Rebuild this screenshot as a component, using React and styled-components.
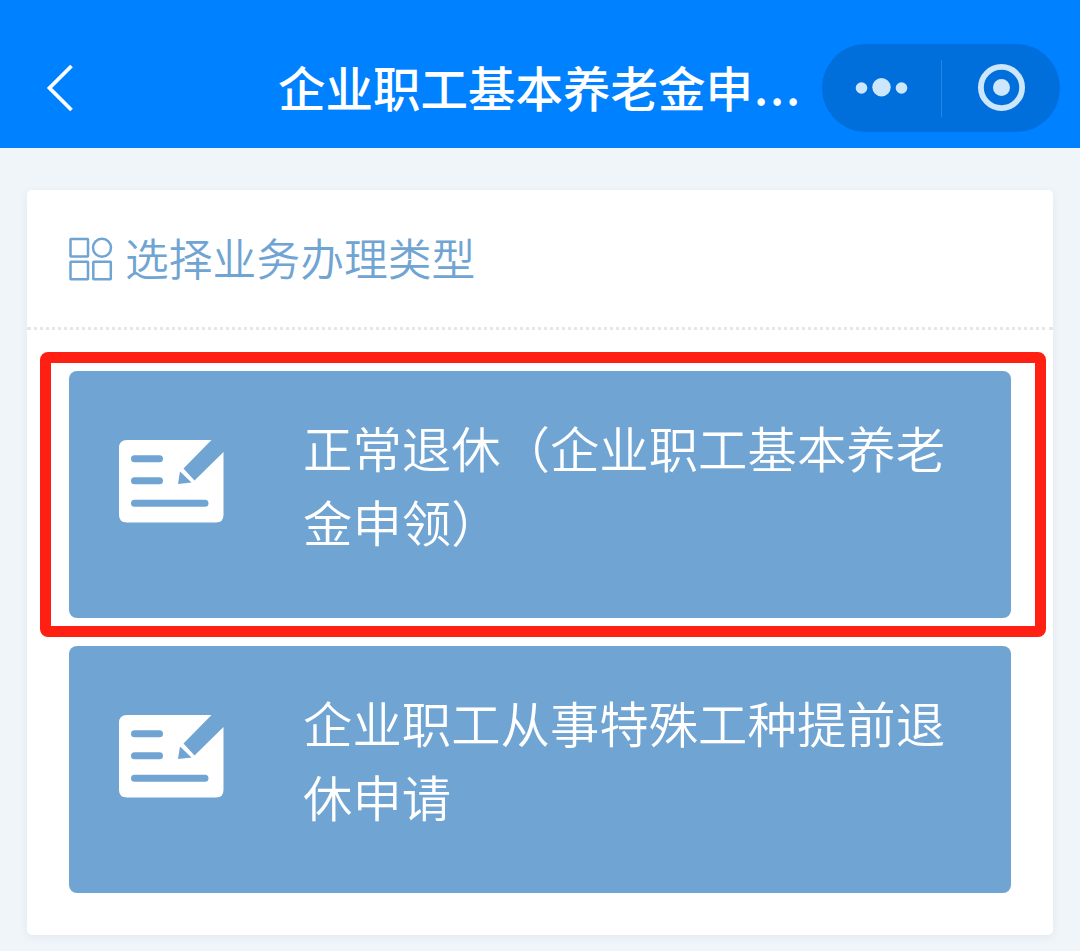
import React from 'react';
import styled, { createGlobalStyle } from 'styled-components';

const colors = {
  primary: '#0081ff',
  capsule: '#006fdb',
  capsuleIcon: '#cce6fb',
  page: '#f0f5f9',
  item: '#70a4d2',
  white: '#ffffff',
  mark: '#ff1f13',
};

const GlobalStyle = createGlobalStyle`
  * {
    box-sizing: border-box;
  }
  body {
    margin: 0;
    background: ${colors.page};
    font-family: 'Noto Sans CJK SC', sans-serif;
  }
`;

const Page = styled.div`
  width: 1080px;
  height: 951px;
  overflow: hidden;
  background: ${colors.page};
`;

const NavBar = styled.header`
  display: flex;
  align-items: center;
  height: 148px;
  padding: 28px 20px 0 44px;
  background: ${colors.primary};
`;

const BackButton = styled.button`
  display: flex;
  width: 32px;
  padding: 0;
  border: 0;
  background: none;
`;

const Title = styled.h1`
  flex: 1;
  margin: 0;
  padding: 0 0 2px 202px;
  color: ${colors.white};
  font-size: 47.5px;
  font-weight: 500;
  line-height: 60px;
  white-space: nowrap;
`;

const Dots = styled.span`
  margin-left: 1px;
  letter-spacing: 1.8px;
  line-height: 1;
  vertical-align: 2px;
`;

const Capsule = styled.div`
  display: flex;
  align-items: center;
  width: 238px;
  height: 88px;
  border-radius: 44px;
  background: ${colors.capsule};
`;

const CapsuleButton = styled.button`
  display: flex;
  flex: 1;
  align-items: center;
  justify-content: center;
  padding: 0;
  border: 0;
  background: none;
`;

const Divider = styled.span`
  width: 1px;
  height: 57px;
  background: #2785e2;
`;

const Card = styled.main`
  position: relative;
  width: 1026px;
  height: 745px;
  margin: 42px 0 0 27px;
  border-radius: 5px;
  background: ${colors.white};
  box-shadow: 0 2px 8px rgba(60, 90, 120, 0.08);
`;

const CardHeader = styled.div`
  display: flex;
  align-items: center;
  gap: 12px;
  height: 140px;
  padding: 0 41px;
  border-bottom: 3px dotted #e6e6e6;
`;

const CardTitle = styled.h2`
  margin: 0;
  padding-bottom: 4px;
  color: ${colors.item};
  font-size: 43.8px;
  font-weight: 350;
  line-height: 60px;
`;

const List = styled.ul`
  display: flex;
  flex-direction: column;
  gap: 28px;
  margin: 0;
  padding: 41px 42px 0;
  list-style: none;
`;

const Item = styled.li`
  display: flex;
  align-items: flex-start;
  gap: 79px;
  height: 247px;
  padding: 39px 50px 0;
  border-radius: 8px;
  background: ${colors.item};
  color: ${colors.white};
  svg {
    flex: none;
    margin-top: 30px;
  }
`;

const ItemText = styled.span`
  width: 650px;
  font-size: 49.4px;
  font-weight: 350;
  line-height: 74px;
`;

// red frame drawn over the card, around the item to pick
const Mark = styled.div`
  position: absolute;
  top: 162px;
  left: 13px;
  width: 1006px;
  height: 285px;
  border-radius: 8px;
  pointer-events: none;
  border: 11px solid ${colors.mark};
`;

const BackIcon = () => (
  <svg width="32" height="48" viewBox="0 0 32 48" fill="none">
    <path d="M27.500 2L5.500 24L27.500 46" stroke={colors.white} strokeWidth="3.8" />
  </svg>
);

const MoreIcon = () => (
  <svg width="54" height="20" viewBox="0 0 54 20" fill={colors.capsuleIcon}>
    <circle cx="7.500" cy="10" r="5.800" />
    <circle cx="27.500" cy="9.300" r="9.200" />
    <circle cx="47.500" cy="10" r="5.800" />
  </svg>
);

const CloseIcon = () => (
  <svg width="48" height="48" viewBox="0 0 48 48">
    <circle cx="24.500" cy="23.500" r="20.600" fill="none" stroke={colors.capsuleIcon} strokeWidth="5.800" />
    <circle cx="24.500" cy="23.500" r="8.500" fill={colors.capsuleIcon} />
  </svg>
);

const GridIcon = () => (
  <svg width="45" height="44" viewBox="0 0 45 44" fill="none" stroke={colors.item} strokeWidth="2.500">
    <rect x="2.500" y="2" width="17.500" height="17.500" rx="0.500" />
    <circle cx="34" cy="10.700" r="9" />
    <rect x="2.500" y="24.700" width="17.500" height="17.500" rx="0.500" />
    <rect x="25.300" y="24.700" width="17.500" height="17.500" rx="0.500" />
  </svg>
);

const FormIcon = () => (
  <svg width="105" height="83" viewBox="0 0 105 83">
    <path
      d="M8 0H92.500L64.500 28.500L75.500 40.500L104.500 12V75Q104.500 82.500 97 82.500H8Q0 82.500 0 75V8Q0 0 8 0Z"
      fill={colors.white}
    />
    <path d="M61 31.500L72.500 42.500L59 44Z" fill={colors.item} />
    <path
      d="M15.500 18.700H40.500M15.500 40.700H40.500M15.500 63.300H86"
      stroke={colors.item}
      strokeWidth="7"
      strokeLinecap="round"
    />
  </svg>
);

const items = ['正常退休（企业职工基本养老金申领）', '企业职工从事特殊工种提前退休申请'];

const App = () => {
  return (
    <Page>
      <GlobalStyle />
      <NavBar>
        <BackButton aria-label="返回">
          <BackIcon />
        </BackButton>
        <Title>
          企业职工基本养老金申<Dots>...</Dots>
        </Title>
        <Capsule>
          <CapsuleButton aria-label="更多">
            <MoreIcon />
          </CapsuleButton>
          <Divider />
          <CapsuleButton aria-label="关闭">
            <CloseIcon />
          </CapsuleButton>
        </Capsule>
      </NavBar>
      <Card>
        <CardHeader>
          <GridIcon />
          <CardTitle>选择业务办理类型</CardTitle>
        </CardHeader>
        <List>
          {items.map((text) => (
            <Item key={text}>
              <FormIcon />
              <ItemText>{text}</ItemText>
            </Item>
          ))}
        </List>
        <Mark />
      </Card>
    </Page>
  );
};

export default App;
